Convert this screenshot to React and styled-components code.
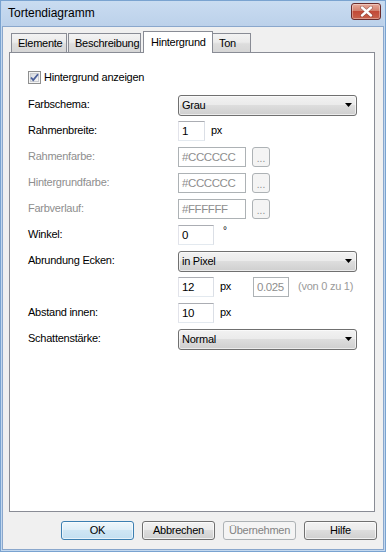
import React from 'react';
import styled, { createGlobalStyle, css } from 'styled-components';

const GlobalStyle = createGlobalStyle`
	html, body {
		margin: 0;
		padding: 0;
	}
	body {
		font-family: "Liberation Sans", Arial, sans-serif;
		font-size: 11px;
		letter-spacing: -0.25px;
		color: #000;
	}
`;

const GREY_TEXT = '#8e8e8e';

const Window = styled.div`
	width: 386px;
	height: 552px;
	box-sizing: border-box;
	display: flex;
	flex-direction: column;
	border: 1px solid #7aa3d0;
	background: #c3d8ef;
	padding: 0 1px 1px;
`;

const TitleBar = styled.div`
	height: 25px;
	flex: 0 0 25px;
	display: flex;
	align-items: flex-start;
	justify-content: space-between;
	padding: 2px 3px 0 6px;
	box-sizing: border-box;
	background: linear-gradient(#c9dcf1, #bcd1ea);
`;

const Title = styled.div`
	font-size: 12px;
	line-height: 20px;
	letter-spacing: 0;
`;

const CloseButton = styled.div`
	width: 30px;
	height: 17px;
	box-sizing: border-box;
	border: 1px solid #6a2b2b;
	border-radius: 3px;
	display: flex;
	align-items: center;
	justify-content: center;
	background: linear-gradient(#e7a999, #d2816f 45%, #c24a38 50%, #c8624c);
	box-shadow: inset 0 0 0 1px rgba(255, 255, 255, 0.35);
`;

const Client = styled.div`
	flex: 1;
	display: flex;
	flex-direction: column;
	background: #f0f0f0;
	border: 1px solid #8aa7cc;
	padding: 4px 6px 9px 6px;
	min-height: 0;
`;

const Tabs = styled.div`
	display: flex;
	align-items: flex-end;
	height: 22px;
	padding-left: 2px;
	margin-bottom: -1px;
	position: relative;
	z-index: 1;
`;

const Tab = styled.div`
	width: ${ ( { $width } ) => $width }px;
	box-sizing: border-box;
	height: 19px;
	margin-bottom: 1px;
	margin-left: 1px;
	border: 1px solid #898c95;
	border-bottom: none;
	padding-left: 6px;
	line-height: 18px;
	white-space: nowrap;
	background: linear-gradient(#f3f3f3, #ebebeb 45%, #dddddd 55%, #d6d6d6);

	&:first-child {
		margin-left: 0;
	}

	${ ( { $active } ) => $active && css`
		height: 22px;
		margin-bottom: 0;
		margin-left: 2px;
		margin-right: -2px;
		padding-left: 7px;
		line-height: 20px;
		background: #fff;
		position: relative;
		z-index: 1;
	` }
`;

const Panel = styled.div`
	flex: 1;
	margin-right: 2px;
	background: #fff;
	border: 1px solid #898c95;
	padding: 14px 16px 0 18px;
`;

const CheckRow = styled.label`
	display: flex;
	align-items: center;
	height: 20px;
	margin-bottom: 5px;
`;

const CheckBox = styled.span`
	width: 13px;
	height: 13px;
	box-sizing: border-box;
	border: 1px solid #8e8f8f;
	background: #f4f4f4;
	margin-right: 3px;
	display: flex;
	align-items: center;
	justify-content: center;
	position: relative;

	&::before {
		content: "";
		position: absolute;
		inset: 1px;
		border: 1px solid #c9ccd1;
		background: linear-gradient(135deg, #d6d9de, #f6f6f6);
	}

	svg {
		position: relative;
	}
`;

const Row = styled.div`
	display: flex;
	align-items: center;
	height: 26px;
`;

const Label = styled.div`
	flex: 0 0 150px;
	padding-bottom: 2px;
	color: ${ ( { $disabled } ) => ( $disabled ? GREY_TEXT : '#000' ) };
`;

const Combo = styled.div`
	width: 179px;
	height: 21px;
	box-sizing: border-box;
	border: 1px solid #707070;
	border-radius: 3px;
	display: flex;
	align-items: center;
	justify-content: space-between;
	padding: 0 4px 1px 3px;
	background: linear-gradient(#f2f2f2, #ebebeb 45%, #dddddd 50%, #cfcfcf);
	box-shadow: inset 0 0 0 1px rgba(255, 255, 255, 0.6);
`;

const TextBox = styled.div`
	width: ${ ( { $width } ) => $width }px;
	height: 20px;
	box-sizing: border-box;
	border: 1px solid;
	border-color: ${ ( { $disabled } ) =>
		$disabled ? '#adb2b5' : '#abadb3 #dbdfe6 #e3e9ef #e2e3ea' };
	background: #fff;
	padding: 0 0 1px 3px;
	display: flex;
	align-items: center;
	color: ${ ( { $disabled } ) => ( $disabled ? GREY_TEXT : '#000' ) };
	font-size: 11.5px;
	letter-spacing: -0.4px;
`;

const DotsButton = styled.div`
	width: 18px;
	height: 20px;
	box-sizing: border-box;
	margin-left: 6px;
	border: 1px solid #adb2b5;
	border-radius: 3px;
	background: #f4f4f4;
	color: ${ GREY_TEXT };
	display: flex;
	align-items: flex-end;
	justify-content: center;
	padding-bottom: 3px;
	font-size: 10px;
	letter-spacing: 0;
	line-height: 8px;
`;

const Unit = styled.span`
	margin-left: ${ ( { $gap } ) => $gap ?? 6 }px;
	width: ${ ( { $width } ) => ( $width ? `${ $width }px` : 'auto' ) };
	padding-bottom: 2px;
	color: ${ ( { $disabled } ) => ( $disabled ? '#9a9a9a' : '#000' ) };
`;

const Degree = styled.span`
	margin-left: 9px;
	align-self: flex-start;
	margin-top: 3px;
	font-size: 10px;
`;

const ButtonBar = styled.div`
	display: flex;
	justify-content: flex-end;
	gap: 8px;
	margin-top: 9px;
`;

const Button = styled.div`
	width: 73px;
	height: 19px;
	box-sizing: border-box;
	border: 1px solid #707070;
	border-radius: 3px;
	display: flex;
	align-items: center;
	justify-content: center;
	padding-bottom: 1px;
	background: linear-gradient(#f2f2f2, #ebebeb 45%, #dddddd 50%, #cfcfcf);
	box-shadow: inset 0 0 0 1px rgba(255, 255, 255, 0.7);

	${ ( { $default } ) => $default && css`
		border-color: #3c7fb1;
		background: linear-gradient(#eef7fc, #e0eff8 45%, #cfe6f4 50%, #c3dff1);
		box-shadow: inset 0 0 0 1px rgba(255, 255, 255, 0.6);
	` }

	${ ( { $disabled } ) => $disabled && css`
		border-color: #adb2b5;
		background: #f4f4f4;
		box-shadow: none;
		color: #838383;
	` }
`;

const ArrowDown = () => (
	<svg width="7" height="4" viewBox="0 0 7 4">
		<path d="M0 0h7L3.5 4z" fill="#000" />
	</svg>
);

const Check = () => (
	<svg width="9" height="9" viewBox="0 0 9 9">
		<path
			d="M1 4.5l2.2 2.6L8 1.2"
			fill="none"
			stroke="#4a5f9a"
			strokeWidth="1.8"
		/>
	</svg>
);

const CloseGlyph = () => (
	<svg width="13" height="11" viewBox="0 0 13 11">
		<path
			d="M2 1.5l9 8M11 1.5l-9 8"
			stroke="#5a2a2a"
			strokeWidth="3.6"
			strokeLinecap="round"
			opacity="0.55"
		/>
		<path
			d="M2 1.5l9 8M11 1.5l-9 8"
			stroke="#fff"
			strokeWidth="2.4"
			strokeLinecap="round"
		/>
	</svg>
);

const TABS = [
	{ label: 'Elemente', width: 56 },
	{ label: 'Beschreibung', width: 73 },
	{ label: 'Hintergrund', width: 70, active: true },
	{ label: 'Ton', width: 39 },
];

function ColorRow( { label, value } ) {
	return (
		<Row>
			<Label $disabled>{ label }</Label>
			<TextBox $width={ 68 } $disabled>{ value }</TextBox>
			<DotsButton>...</DotsButton>
		</Row>
	);
}

function ComboRow( { label, value } ) {
	return (
		<Row>
			<Label>{ label }</Label>
			<Combo>
				<span>{ value }</span>
				<ArrowDown />
			</Combo>
		</Row>
	);
}

export default function App() {
	return (
		<>
			<GlobalStyle />
			<Window>
				<TitleBar>
					<Title>Tortendiagramm</Title>
					<CloseButton>
						<CloseGlyph />
					</CloseButton>
				</TitleBar>
				<Client>
					<Tabs>
						{ TABS.map( ( tab ) => (
							<Tab key={ tab.label } $width={ tab.width } $active={ tab.active }>
								{ tab.label }
							</Tab>
						) ) }
					</Tabs>
					<Panel>
						<CheckRow>
							<CheckBox>
								<Check />
							</CheckBox>
							Hintergrund anzeigen
						</CheckRow>
						<ComboRow label="Farbschema:" value="Grau" />
						<Row>
							<Label>Rahmenbreite:</Label>
							<TextBox $width={ 27 }>1</TextBox>
							<Unit>px</Unit>
						</Row>
						<ColorRow label="Rahmenfarbe:" value="#CCCCCC" />
						<ColorRow label="Hintergrundfarbe:" value="#CCCCCC" />
						<ColorRow label="Farbverlauf:" value="#FFFFFF" />
						<Row>
							<Label>Winkel:</Label>
							<TextBox $width={ 36 }>0</TextBox>
							<Degree>°</Degree>
						</Row>
						<ComboRow label="Abrundung Ecken:" value="in Pixel" />
						<Row>
							<Label />
							<TextBox $width={ 36 }>12</TextBox>
							<Unit $width={ 33 }>px</Unit>
							<TextBox $width={ 36 } $disabled>0.025</TextBox>
							<Unit $gap={ 9 } $disabled>(von 0 zu 1)</Unit>
						</Row>
						<Row>
							<Label>Abstand innen:</Label>
							<TextBox $width={ 36 }>10</TextBox>
							<Unit>px</Unit>
						</Row>
						<ComboRow label="Schattenstärke:" value="Normal" />
					</Panel>
					<ButtonBar>
						<Button $default>OK</Button>
						<Button>Abbrechen</Button>
						<Button $disabled>Übernehmen</Button>
						<Button>Hilfe</Button>
					</ButtonBar>
				</Client>
			</Window>
		</>
	);
}
